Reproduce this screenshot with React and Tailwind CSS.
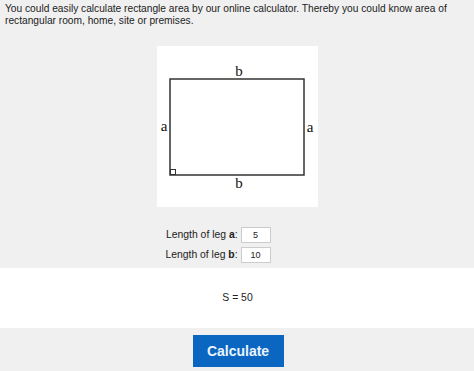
export default function App() {
  return (
    <div className="w-[474px] h-[371px] overflow-hidden bg-[#f0f0f0] text-[#222] font-['Liberation_Sans',Arial,sans-serif]">
      <div className="px-[5px] pt-[3px] text-[10.2px] leading-[12px]">
        You could easily calculate rectangle area by our online calculator. Thereby you could know area of rectangular room, home, site or premises.
      </div>

      <div className="flex justify-center pt-[19px] pl-[1px]">
        <div className="w-[161px] h-[161px] bg-white">
          <svg width="161" height="161" viewBox="0 0 161 161">
            <rect x="13" y="33" width="134" height="96" fill="none" stroke="#333" strokeWidth="1.5" />
            <rect x="13.5" y="123.5" width="5" height="5" fill="none" stroke="#333" strokeWidth="1" />
            <g fontFamily="'Liberation Serif', serif" fontSize="15" fill="#111" textAnchor="middle">
              <text x="82" y="30">b</text>
              <text x="82" y="142">b</text>
              <text x="7" y="85">a</text>
              <text x="153" y="86">a</text>
            </g>
          </svg>
        </div>
      </div>

      <div className="grid grid-cols-[auto_auto] justify-center items-center gap-y-[4px] gap-x-[3px] pt-[20px] pr-[38px] text-[10.4px] whitespace-nowrap">
        <span className="text-right">Length of leg <b>a</b>:</span>
        <input readOnly value="5" className="w-[30px] h-[16px] bg-white border border-[#ccc] text-center text-[9px] outline-none" />
        <span className="text-right">Length of leg <b>b</b>:</span>
        <input readOnly value="10" className="w-[30px] h-[16px] bg-white border border-[#ccc] text-center text-[9px] outline-none" />
      </div>

      <div className="mt-[5px] h-[60px] bg-white flex items-center justify-center text-[10.4px] pl-[1px]">
        S = 50
      </div>

      <div className="flex justify-center pt-[7px] pl-[2px]">
        <button className="w-[91px] h-[32px] bg-[#0a66c0] text-[#eaf4ff] font-bold text-[14px]">
          Calculate
        </button>
      </div>
    </div>
  );
}
